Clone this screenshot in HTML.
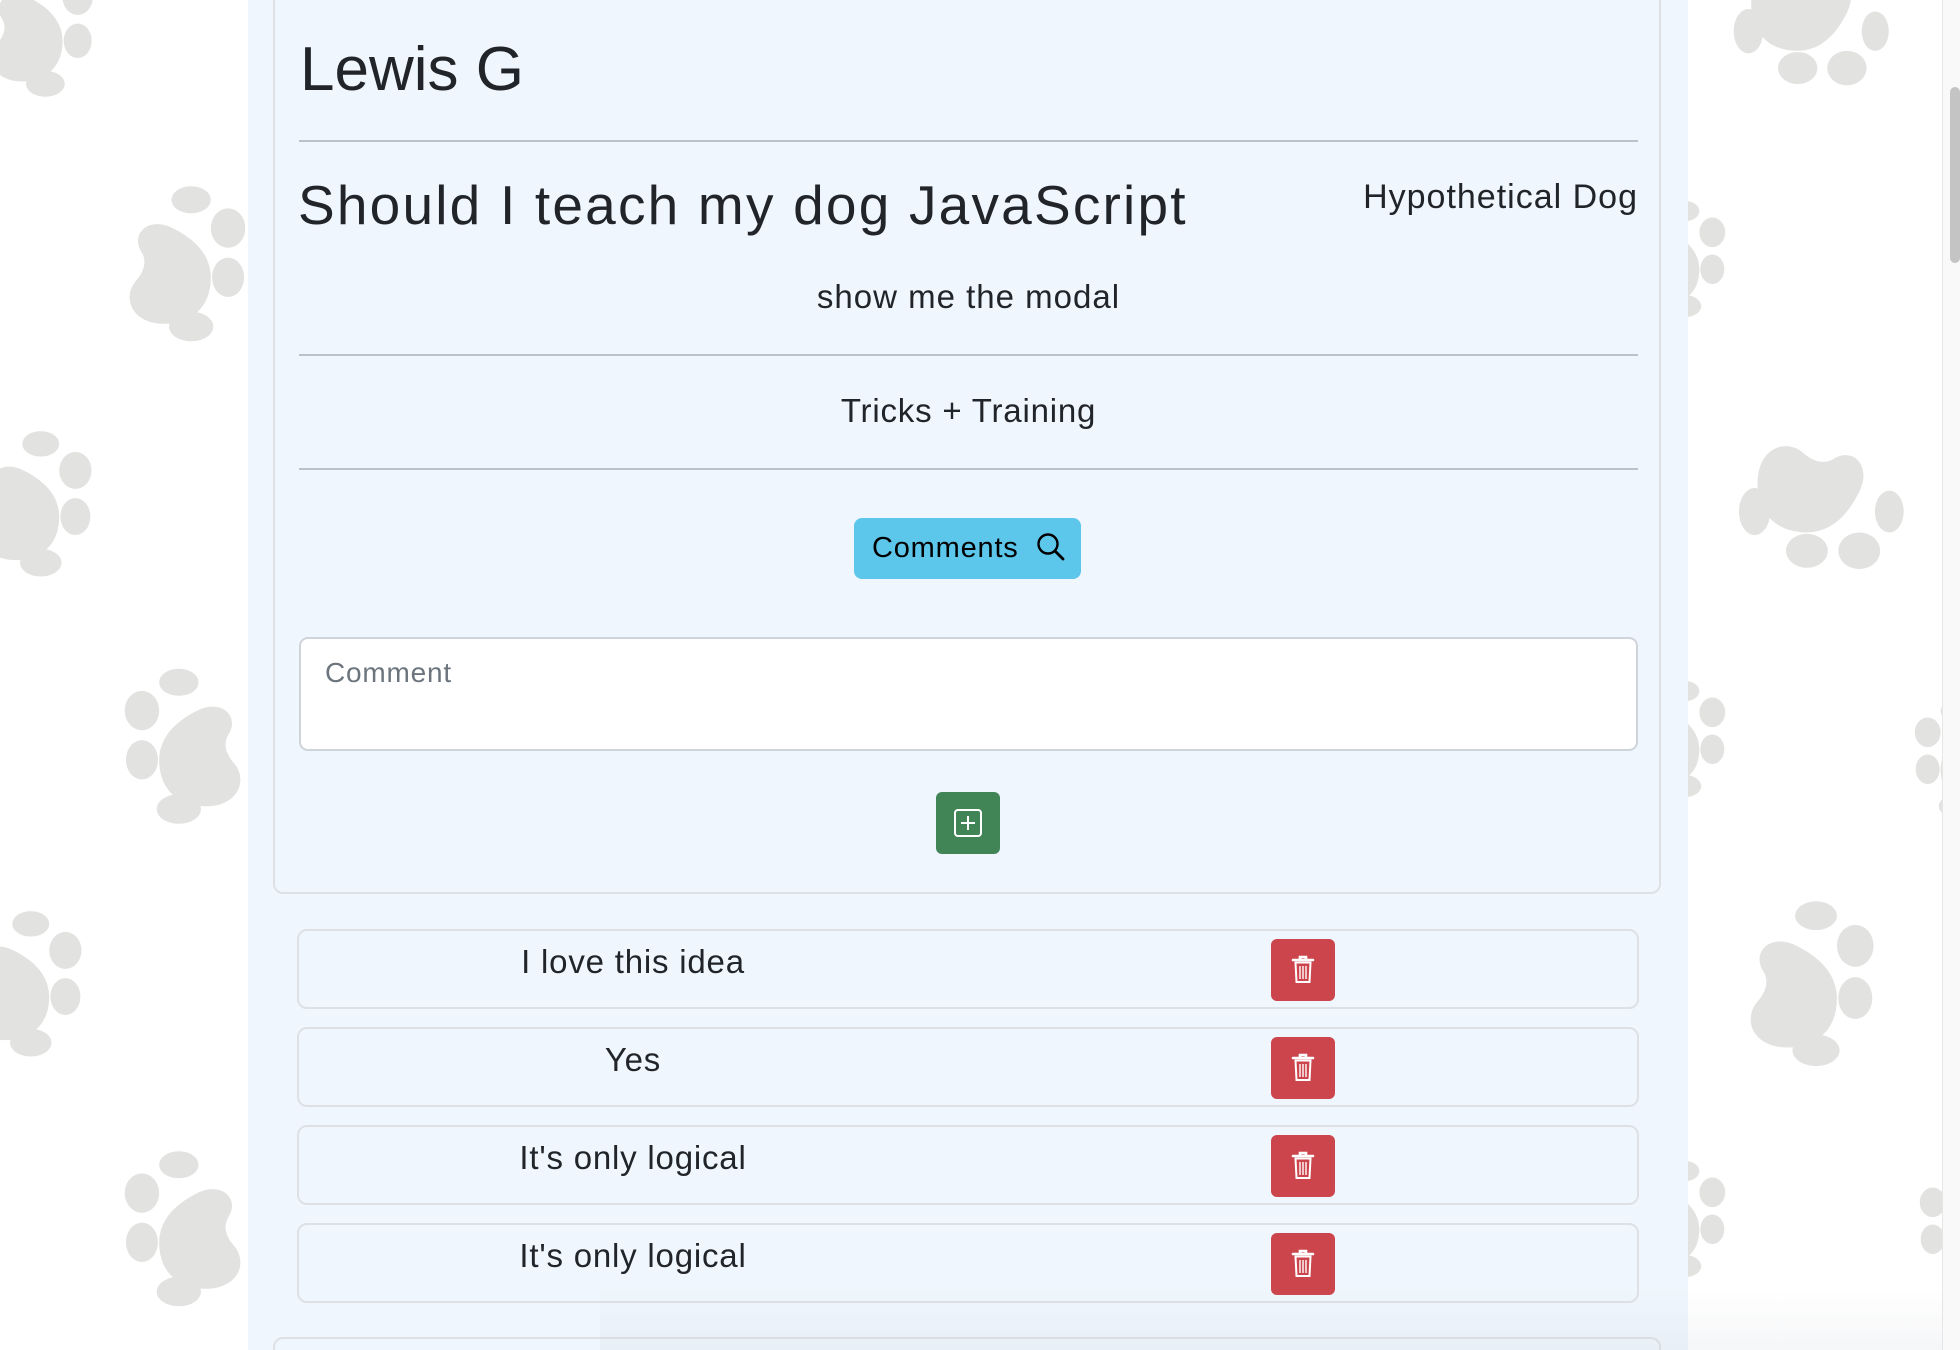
<!DOCTYPE html>
<html><head><meta charset="utf-8">
<style>
html,body{margin:0;padding:0;overflow:hidden;width:1960px;height:1350px}
body{position:relative;background:#fff;font-family:"Liberation Sans",sans-serif;color:#212529}
.paw{position:absolute}
.col{position:absolute;left:248px;top:0;width:1440px;height:1350px;background:#eff6fd}
.card{position:absolute;left:273px;top:-10px;width:1388px;height:904px;border:2px solid #dde1e6;border-radius:10px;background:#eff6fd;box-sizing:border-box}
.card2{position:absolute;left:273px;top:1337px;width:1388px;height:13px;border:2px solid #dde1e6;border-bottom:none;border-radius:10px 10px 0 0;box-sizing:border-box}
.t{position:absolute;white-space:nowrap}
.hr{position:absolute;left:299px;width:1339px;height:2px;background:#bcc2c9}
.btnc{position:absolute;left:854px;top:518px;width:227px;height:61px;background:#5cc7eb;border-radius:8px}
.ta{position:absolute;left:299px;top:637px;width:1339px;height:114px;background:#fff;border:2px solid #ced4da;border-radius:9px;box-sizing:border-box}
.add{position:absolute;left:936px;top:792px;width:64px;height:62px;background:#418557;border-radius:6px}
.row{position:absolute;left:297px;width:1342px;height:80px;border:2px solid #dde1e6;border-radius:10px;box-sizing:border-box}
.del{position:absolute;left:1271px;width:64px;height:62px;background:#cc454c;border-radius:6px}
.sb{position:absolute;left:1942px;top:0;width:18px;height:1350px;background:#f9f9f9;border-left:1px solid #e6e6e6}
.thumb{position:absolute;left:1950px;top:87px;width:10px;height:176px;background:#c4c4c4;border-radius:5px}
.shade{position:absolute;left:600px;top:1290px;width:1342px;height:60px;background:linear-gradient(to bottom,rgba(200,200,210,0),rgba(200,205,215,0.18))}
</style></head><body>
<svg width="0" height="0" style="position:absolute"><defs>
<g id="p" fill="#e2e2e1">
<path d="M30 55 C20 40 35 25 55 35 C75 45 90 60 85 85 C80 110 55 115 40 112 C20 108 15 90 25 78 C32 70 34 62 30 55Z"/>
<ellipse cx="70" cy="12" rx="16" ry="11"/>
<ellipse cx="100" cy="35" rx="14" ry="16"/>
<ellipse cx="100" cy="75" rx="13" ry="16"/>
<ellipse cx="70" cy="115" rx="18" ry="12"/>
</g>
<g id="pm"><use href="#p" transform="translate(130,0) scale(-1,1)"/></g>
<g id="pd"><use href="#p" transform="translate(130,0) rotate(90)"/></g>
</defs></svg>
<svg class="paw" style="left:-30px;top:-40px" width="140" height="140" viewBox="0 0 130 130"><use href="#p"/></svg>
<svg class="paw" style="left:105px;top:175px" width="160" height="180" viewBox="0 0 130 130"><use href="#p"/></svg>
<svg class="paw" style="left:-40px;top:420px" width="150" height="170" viewBox="0 0 130 130"><use href="#p"/></svg>
<svg class="paw" style="left:105px;top:660px" width="160" height="175" viewBox="0 0 130 130"><use href="#pm"/></svg>
<svg class="paw" style="left:-50px;top:900px" width="150" height="170" viewBox="0 0 130 130"><use href="#p"/></svg>
<svg class="paw" style="left:105px;top:1140px" width="160" height="180" viewBox="0 0 130 130"><use href="#pm"/></svg>
<svg class="paw" style="left:1730px;top:-60px" width="160" height="170" viewBox="0 0 130 130"><use href="#pd"/></svg>
<svg class="paw" style="left:1735px;top:420px" width="170" height="170" viewBox="0 0 130 130"><use href="#pd"/></svg>
<svg class="paw" style="left:1722px;top:900px" width="175" height="170" viewBox="0 0 130 130"><use href="#p"/></svg>
<svg class="paw" style="left:1620px;top:190px" width="120" height="140" viewBox="0 0 130 130"><use href="#p"/></svg>
<svg class="paw" style="left:1620px;top:670px" width="120" height="140" viewBox="0 0 130 130"><use href="#p"/></svg>
<svg class="paw" style="left:1620px;top:1150px" width="120" height="140" viewBox="0 0 130 130"><use href="#p"/></svg>
<svg class="paw" style="left:1900px;top:690px" width="120" height="140" viewBox="0 0 130 130"><use href="#pm"/></svg>
<svg class="paw" style="left:1905px;top:1160px" width="120" height="140" viewBox="0 0 130 130"><use href="#pm"/></svg>

<div class="col"></div>
<div class="card"></div>
<div class="t" style="left:300px;top:30px;font-size:62px;line-height:80px">Lewis G</div>
<div class="hr" style="top:140px"></div>
<div class="t" style="left:298px;top:170px;font-size:55px;line-height:70px;letter-spacing:2.2px">Should I teach my dog JavaScript</div>
<div class="t" style="right:322px;top:176px;font-size:34px;line-height:42px;letter-spacing:1px">Hypothetical Dog</div>
<div class="t" style="left:299px;width:1339px;text-align:center;top:276px;font-size:33px;line-height:42px;letter-spacing:1px">show me the modal</div>
<div class="hr" style="top:354px"></div>
<div class="t" style="left:299px;width:1339px;text-align:center;top:390px;font-size:33px;line-height:42px;letter-spacing:0.8px">Tricks + Training</div>
<div class="hr" style="top:468px"></div>
<div class="btnc"><span class="t" style="left:18px;top:12px;font-size:29px;line-height:36px;color:#000;letter-spacing:0.8px">Comments</span>
<svg style="position:absolute;left:182px;top:14px" width="30" height="30" viewBox="0 0 30 30"><circle cx="12" cy="12" r="9.5" fill="none" stroke="#000" stroke-width="2.4"/><path d="M19 19 L27 27" stroke="#000" stroke-width="2.8" stroke-linecap="round"/></svg></div>
<div class="ta"><span class="t" style="left:24px;top:16px;font-size:28px;line-height:36px;color:#6c757d;letter-spacing:0.8px">Comment</span></div>
<div class="add"><svg style="position:absolute;left:18px;top:17px" width="28" height="28" viewBox="0 0 28 28"><rect x="1" y="1" width="26" height="26" rx="3" fill="none" stroke="#fff" stroke-width="2"/><path d="M14 7V21M7 14H21" stroke="#fff" stroke-width="2"/></svg></div>

<div class="row" style="top:929px"></div>
<div class="row" style="top:1027px"></div>
<div class="row" style="top:1125px"></div>
<div class="row" style="top:1223px"></div>
<div class="card2"></div>
<div class="t" style="left:333px;width:600px;text-align:center;top:941px;font-size:33px;line-height:42px;letter-spacing:0.8px">I love this idea</div>
<div class="t" style="left:333px;width:600px;text-align:center;top:1039px;font-size:33px;line-height:42px;letter-spacing:0.8px">Yes</div>
<div class="t" style="left:333px;width:600px;text-align:center;top:1137px;font-size:33px;line-height:42px;letter-spacing:0.8px">It's only logical</div>
<div class="t" style="left:333px;width:600px;text-align:center;top:1235px;font-size:33px;line-height:42px;letter-spacing:0.8px">It's only logical</div>

<div class="del" style="top:939px"><svg style="position:absolute;left:20px;top:16px" width="24" height="30" viewBox="0 0 24 30"><path d="M2 5H22M9 5V2H15V5" stroke="#fff" stroke-width="2.6" fill="none" stroke-linecap="round"/><path d="M4.5 7.5H19.5L18.5 27H5.5Z" fill="none" stroke="#fff" stroke-width="2"/><path d="M9 11V24M12 11V24M15 11V24" stroke="#fff" stroke-width="1.4"/></svg></div>
<div class="del" style="top:1037px"><svg style="position:absolute;left:20px;top:16px" width="24" height="30" viewBox="0 0 24 30"><path d="M2 5H22M9 5V2H15V5" stroke="#fff" stroke-width="2.6" fill="none" stroke-linecap="round"/><path d="M4.5 7.5H19.5L18.5 27H5.5Z" fill="none" stroke="#fff" stroke-width="2"/><path d="M9 11V24M12 11V24M15 11V24" stroke="#fff" stroke-width="1.4"/></svg></div>
<div class="del" style="top:1135px"><svg style="position:absolute;left:20px;top:16px" width="24" height="30" viewBox="0 0 24 30"><path d="M2 5H22M9 5V2H15V5" stroke="#fff" stroke-width="2.6" fill="none" stroke-linecap="round"/><path d="M4.5 7.5H19.5L18.5 27H5.5Z" fill="none" stroke="#fff" stroke-width="2"/><path d="M9 11V24M12 11V24M15 11V24" stroke="#fff" stroke-width="1.4"/></svg></div>
<div class="del" style="top:1233px"><svg style="position:absolute;left:20px;top:16px" width="24" height="30" viewBox="0 0 24 30"><path d="M2 5H22M9 5V2H15V5" stroke="#fff" stroke-width="2.6" fill="none" stroke-linecap="round"/><path d="M4.5 7.5H19.5L18.5 27H5.5Z" fill="none" stroke="#fff" stroke-width="2"/><path d="M9 11V24M12 11V24M15 11V24" stroke="#fff" stroke-width="1.4"/></svg></div>

<div class="shade"></div>
<div class="sb"></div>
<div class="thumb"></div>
</body></html>
